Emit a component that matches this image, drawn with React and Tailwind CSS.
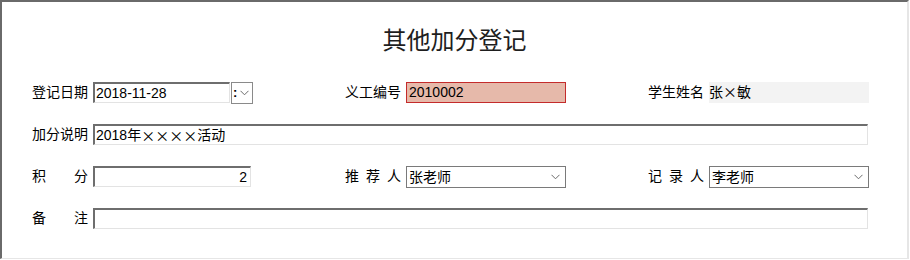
import React from 'react';

const font = { fontFamily: '"Liberation Sans", "Noto Sans CJK SC", sans-serif' };

// small grey chevron used by the combo boxes
const Chevron = () => (
  <svg width="9" height="6" viewBox="0 0 9 6" className="shrink-0">
    <polyline points="0.5,0.8 4.5,4.8 8.5,0.8" fill="none" stroke="#6b6b6b" strokeWidth="1" />
  </svg>
);

const Label = ({ chars }) => (
  <div className="w-[56px] mr-[5px] flex justify-between text-[14px] leading-[21px] text-black shrink-0">
    {chars.map((c, i) => (
      <span key={i}>{c}</span>
    ))}
  </div>
);

const Cjk = ({ children }) => (
  <span style={{ fontFamily: '"Noto Sans CJK SC", sans-serif' }}>{children}</span>
);

const inset = 'h-[21px] bg-white border-t-2 border-l-2 border-t-[#6e6e6e] border-l-[#6e6e6e] border-r border-b border-r-[#e3e3e3] border-b-[#e3e3e3]';

const Select = ({ value }) => (
  <div className="w-[160px] h-[22px] border border-[#7a7a7a] bg-white flex items-center justify-between pl-[2px] pr-[5px]">
    <span className="text-[14px] leading-[20px] text-black">{value}</span>
    <Chevron />
  </div>
);

const App = () => {
  return (
    <div className="w-[910px] h-[260px] bg-white" style={font}>
      <div className="w-[909px] h-[259px] border-t-2 border-l-2 border-t-[#6a6a6a] border-l-[#6a6a6a] border-r-2 border-r-[#e6e6e6] border-b border-b-[#e6e6e6]">
        <h1 className="pt-[25px] text-center text-[24px] leading-[24px] text-[#1e1e1e]" style={{ fontFamily: '"Noto Sans CJK SC", sans-serif' }}>
          其他加分登记
        </h1>

        <div className="mt-[31px] pl-[30px] flex flex-col gap-[21px]">
          {/* row 1 */}
          <div className="flex h-[21px] items-center">
            <div className="w-[313px] flex items-center">
              <Label chars={['登记日期']} />
              <div className={`${inset} w-[137px] flex items-center pl-[1px] text-[14px] leading-[17px]`}>2018-11-28</div>
              <div className="ml-[1px] w-[22px] h-[22px] border border-[#8a8a8a] bg-white flex items-center pl-[1px] gap-[3px]">
                <span className="text-[13px] leading-[14px] font-bold text-black">:</span>
                <Chevron />
              </div>
            </div>
            <div className="w-[303px] flex items-center">
              <Label chars={['义工编号']} />
              <div className="w-[160px] h-[21px] bg-[#e6b9aa] border border-[#c42b2b] flex items-center pl-[2px] text-[14px] leading-[17px] text-black">
                2010002
              </div>
            </div>
            <div className="flex items-center">
              <Label chars={['学生姓名']} />
              <div className="w-[160px] h-[21px] bg-[#f3f3f3] pt-[1px] text-[14px] leading-[16px] text-black">
                张<Cjk>×</Cjk>敏
              </div>
            </div>
          </div>

          {/* row 2 */}
          <div className="flex h-[21px] items-center">
            <Label chars={['加分说明']} />
            <div className={`${inset} w-[775px] flex items-center pl-[1px] text-[14px] leading-[17px] text-black`}>
              2018年<Cjk>××××</Cjk>活动
            </div>
          </div>

          {/* row 3 */}
          <div className="flex h-[21px] items-center">
            <div className="w-[313px] flex items-center">
              <Label chars={['积', '分']} />
              <div className={`${inset} w-[158px] flex items-center justify-end pr-[3px] text-[14px] leading-[17px] text-black`}>2</div>
            </div>
            <div className="w-[303px] flex items-center">
              <Label chars={['推', '荐', '人']} />
              <Select value="张老师" />
            </div>
            <div className="flex items-center">
              <Label chars={['记', '录', '人']} />
              <Select value="李老师" />
            </div>
          </div>

          {/* row 4 */}
          <div className="flex h-[21px] items-center">
            <Label chars={['备', '注']} />
            <div className={`${inset} w-[775px]`} />
          </div>
        </div>
      </div>
    </div>
  );
};

export default App;
